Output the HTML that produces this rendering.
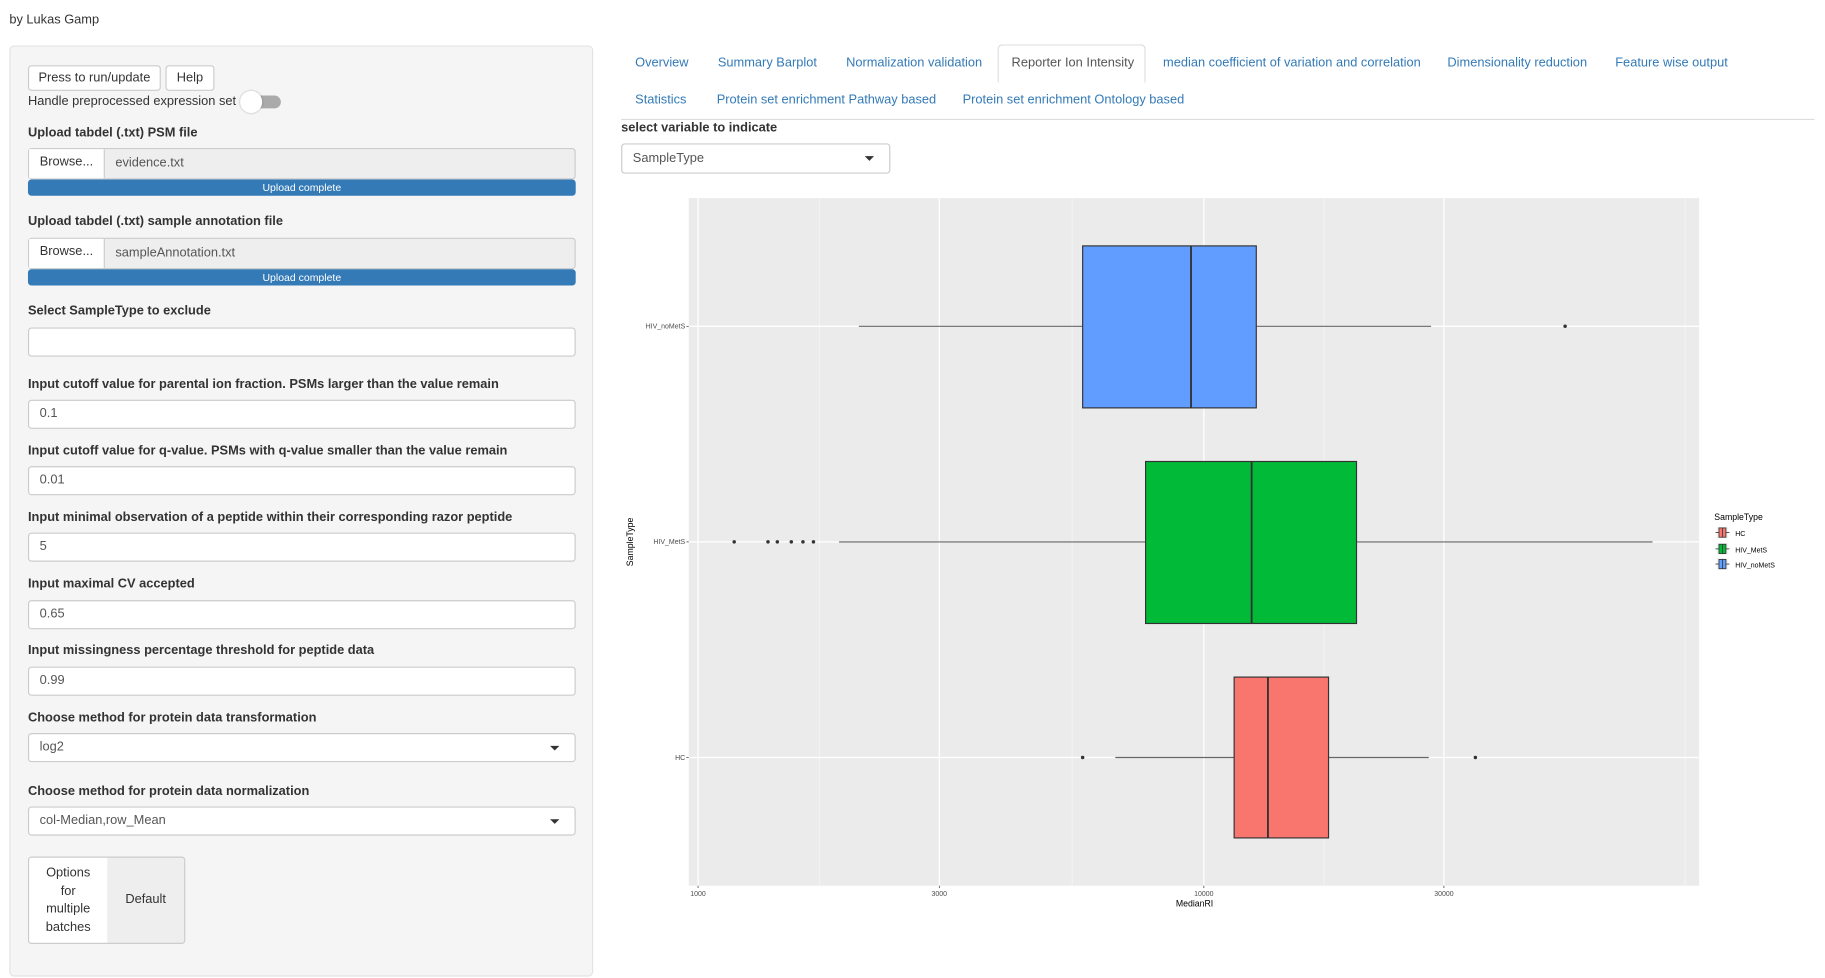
<!DOCTYPE html>
<html><head><meta charset="utf-8">
<style>
html,body{margin:0;padding:0;background:#fff;overflow:hidden;}
body{width:1825px;height:978px;}
#w{position:absolute;left:0;top:0;width:1566px;height:839px;transform:scale(1.16539);transform-origin:0 0;font-family:"Liberation Sans",sans-serif;font-size:11px;color:#333;}
.a{position:absolute;}
.lbl{position:absolute;left:24px;font-weight:bold;font-size:11px;color:#333;}
.inp{position:absolute;left:24px;width:468px;height:25px;border:1px solid #ccc;border-radius:3px;background:#fff;box-sizing:border-box;padding:0 9px;line-height:23px;font-size:11px;color:#555;}
.car{position:absolute;right:13px;top:10px;width:0;height:0;border-left:4px solid transparent;border-right:4px solid transparent;border-top:4px solid #333;}
.btn{position:absolute;height:22px;border:1px solid #ccc;border-radius:3px;background:#fff;box-sizing:border-box;line-height:20px;text-align:center;font-size:11px;color:#333;}
.file{position:absolute;left:24px;width:470px;height:27px;border:1px solid #ccc;border-radius:3px;background:#eee;box-sizing:border-box;}
.file .b{position:absolute;left:0;top:0;width:64px;height:25px;background:#fff;border-right:1px solid #ccc;line-height:23px;text-align:center;color:#333;}
.file .t{position:absolute;left:74px;top:0;line-height:25px;color:#555;}
.bar{position:absolute;left:24px;width:470px;height:14px;background:#337ab7;border-radius:3px;color:#fff;font-size:9px;line-height:14px;text-align:center;}
.tab{position:absolute;color:#337ab7;font-size:11px;}
</style></head><body><div id="w">
<div class="a" style="left:8px;top:11px;">by Lukas Gamp</div>
<div class="a" style="left:8px;top:39px;width:501px;height:799px;background:#f5f5f5;border:1px solid #e3e3e3;border-radius:4px;box-sizing:border-box;"></div>
<div class="btn" style="left:24px;top:56px;width:114px;">Press to run/update</div>
<div class="btn" style="left:142px;top:56px;width:42px;">Help</div>
<div class="a" style="left:24px;top:81px;">Handle preprocessed expression set</div>
<div class="a" style="left:212px;top:82px;width:29px;height:11px;border-radius:6px;background:#aaa;"></div>
<div class="a" style="left:206px;top:78px;width:19px;height:19px;border-radius:50%;background:#fff;box-shadow:0 0 2px rgba(0,0,0,.3);"></div>

<div class="lbl" style="top:108px;">Upload tabdel (.txt) PSM file</div>
<div class="file" style="top:127px;"><div class="b">Browse...</div><div class="t">evidence.txt</div></div>
<div class="bar" style="top:154px;">Upload complete</div>
<div class="lbl" style="top:184px;">Upload tabdel (.txt) sample annotation file</div>
<div class="file" style="top:204px;"><div class="b">Browse...</div><div class="t">sampleAnnotation.txt</div></div>
<div class="bar" style="top:231px;">Upload complete</div>

<div class="lbl" style="top:261px;">Select SampleType to exclude</div>
<div class="inp" style="top:281px;width:470px;"></div>
<div class="lbl" style="top:324px;">Input cutoff value for parental ion fraction. PSMs larger than the value remain</div>
<div class="inp" style="top:343px;width:470px;">0.1</div>
<div class="lbl" style="top:381px;">Input cutoff value for q-value. PSMs with q-value smaller than the value remain</div>
<div class="inp" style="top:400px;width:470px;">0.01</div>
<div class="lbl" style="top:438px;">Input minimal observation of a peptide within their corresponding razor peptide</div>
<div class="inp" style="top:457px;width:470px;">5</div>
<div class="lbl" style="top:495px;">Input maximal CV accepted</div>
<div class="inp" style="top:515px;width:470px;">0.65</div>
<div class="lbl" style="top:552px;">Input missingness percentage threshold for peptide data</div>
<div class="inp" style="top:572px;width:470px;">0.99</div>
<div class="lbl" style="top:610px;">Choose method for protein data transformation</div>
<div class="inp" style="top:629px;width:470px;">log2<div class="car"></div></div>
<div class="lbl" style="top:673px;">Choose method for protein data normalization</div>
<div class="inp" style="top:692px;width:470px;">col-Median,row_Mean<div class="car"></div></div>
<div class="a" style="left:24px;top:735px;width:135px;height:75px;border:1px solid #ccc;border-radius:3px;box-sizing:border-box;background:#eee;overflow:hidden;">
<div class="a" style="left:0;top:0;width:67px;height:73px;background:#fff;text-align:center;line-height:15.5px;padding-top:6px;box-sizing:border-box;">Options<br>for<br>multiple<br>batches</div>
<div class="a" style="left:67px;top:30px;width:66px;text-align:center;">Default</div>
</div>

<div class="a" style="left:533px;top:102px;width:1024px;height:1px;background:#ddd;"></div>
<div class="a" style="left:856px;top:38px;width:127px;height:65px;"></div>
<div class="a" style="left:856px;top:38px;width:127px;height:33px;border:1px solid #ddd;border-bottom:none;border-radius:4px 4px 0 0;box-sizing:border-box;background:#fff;"></div>
<div class="tab" style="left:545px;top:48px;">Overview</div>
<div class="tab" style="left:616px;top:48px;">Summary Barplot</div>
<div class="tab" style="left:726px;top:48px;">Normalization validation</div>
<div class="tab" style="left:868px;top:48px;color:#555;">Reporter Ion Intensity</div>
<div class="tab" style="left:998px;top:48px;">median coefficient of variation and correlation</div>
<div class="tab" style="left:1242px;top:48px;">Dimensionality reduction</div>
<div class="tab" style="left:1386px;top:48px;">Feature wise output</div>
<div class="tab" style="left:545px;top:80px;">Statistics</div>
<div class="tab" style="left:615px;top:80px;">Protein set enrichment Pathway based</div>
<div class="tab" style="left:826px;top:80px;">Protein set enrichment Ontology based</div>
<div class="a" style="left:533px;top:104px;font-weight:bold;">select variable to indicate</div>
<div class="inp" style="left:533px;top:123px;width:231px;height:26px;line-height:24px;">SampleType<div class="car"></div></div>

<svg class="a" style="left:0;top:0;" width="1566" height="839" font-family="Liberation Sans,sans-serif">
<rect x="591" y="170" width="867" height="590" fill="#ebebeb"/>
<g stroke="#f7f7f7" stroke-width="0.6">
<line x1="703" y1="170" x2="703" y2="760"/><line x1="920" y1="170" x2="920" y2="760"/><line x1="1136" y1="170" x2="1136" y2="760"/><line x1="1446" y1="170" x2="1446" y2="760"/>
</g>
<g stroke="#fff" stroke-width="1.1">
<line x1="599" y1="170" x2="599" y2="760"/><line x1="806" y1="170" x2="806" y2="760"/><line x1="1033" y1="170" x2="1033" y2="760"/><line x1="1239" y1="170" x2="1239" y2="760"/>
<line x1="591" y1="280" x2="1458" y2="280"/><line x1="591" y1="465" x2="1458" y2="465"/><line x1="591" y1="650" x2="1458" y2="650"/>
</g>
<g stroke="#666" stroke-width="1">
<line x1="737" y1="280" x2="929" y2="280"/><line x1="1078" y1="280" x2="1228" y2="280"/>
<line x1="720" y1="465" x2="983" y2="465"/><line x1="1164" y1="465" x2="1418" y2="465"/>
<line x1="957" y1="650" x2="1059" y2="650"/><line x1="1140" y1="650" x2="1226" y2="650"/>
</g>
<g stroke="#333" stroke-width="1">
<rect x="929" y="211" width="149" height="139" fill="#619CFF"/><line x1="1022" y1="211" x2="1022" y2="350" stroke-width="1.6"/>
<rect x="983" y="396" width="181" height="139" fill="#00BA38"/><line x1="1074" y1="396" x2="1074" y2="535" stroke-width="1.6"/>
<rect x="1059" y="581" width="81" height="138" fill="#F8766D"/><line x1="1088" y1="581" x2="1088" y2="719" stroke-width="1.6"/>
</g>
<g fill="#333">
<circle cx="1343" cy="280" r="1.5"/>
<circle cx="630" cy="465" r="1.5"/><circle cx="659" cy="465" r="1.5"/><circle cx="667" cy="465" r="1.5"/><circle cx="679" cy="465" r="1.5"/><circle cx="689" cy="465" r="1.5"/><circle cx="698" cy="465" r="1.5"/>
<circle cx="929" cy="650" r="1.5"/><circle cx="1266" cy="650" r="1.5"/>
</g>
<g font-size="6" fill="#4d4d4d" text-anchor="end">
<text x="588" y="282">HIV_noMetS</text><text x="588" y="467">HIV_MetS</text><text x="588" y="652">HC</text>
</g>
<g stroke="#333" stroke-width="0.6"><line x1="589" y1="280" x2="591" y2="280"/><line x1="589" y1="465" x2="591" y2="465"/><line x1="589" y1="650" x2="591" y2="650"/>
<line x1="599" y1="760" x2="599" y2="762"/><line x1="806" y1="760" x2="806" y2="762"/><line x1="1033" y1="760" x2="1033" y2="762"/><line x1="1239" y1="760" x2="1239" y2="762"/></g>
<g font-size="6" fill="#4d4d4d" text-anchor="middle">
<text x="599" y="769">1000</text><text x="806" y="769">3000</text><text x="1033" y="769">10000</text><text x="1239" y="769">30000</text>
</g>
<text x="1025" y="778" font-size="7.5" text-anchor="middle" fill="#000">MedianRI</text>
<text x="0" y="0" font-size="7.5" text-anchor="middle" fill="#000" transform="translate(543,465) rotate(-90)">SampleType</text>
<text x="1471" y="446" font-size="7.5" fill="#000">SampleType</text>
<g stroke="#333" stroke-width="0.7">
<rect x="1473" y="452" width="10" height="10" fill="#f2f2f2" stroke="none"/><rect x="1475" y="453" width="6" height="8" fill="#F8766D"/><line x1="1478" y1="453" x2="1478" y2="461"/><line x1="1472" y1="457" x2="1475" y2="457"/><line x1="1481" y1="457" x2="1484" y2="457"/>
<rect x="1473" y="466" width="10" height="10" fill="#f2f2f2" stroke="none"/><rect x="1475" y="467" width="6" height="8" fill="#00BA38"/><line x1="1478" y1="467" x2="1478" y2="475"/><line x1="1472" y1="471" x2="1475" y2="471"/><line x1="1481" y1="471" x2="1484" y2="471"/>
<rect x="1473" y="479" width="10" height="10" fill="#f2f2f2" stroke="none"/><rect x="1475" y="480" width="6" height="8" fill="#619CFF"/><line x1="1478" y1="480" x2="1478" y2="488"/><line x1="1472" y1="484" x2="1475" y2="484"/><line x1="1481" y1="484" x2="1484" y2="484"/>
</g>
<g font-size="6" fill="#000"><text x="1489" y="460">HC</text><text x="1489" y="474">HIV_MetS</text><text x="1489" y="487">HIV_noMetS</text></g>
</svg>
</div></body></html>
